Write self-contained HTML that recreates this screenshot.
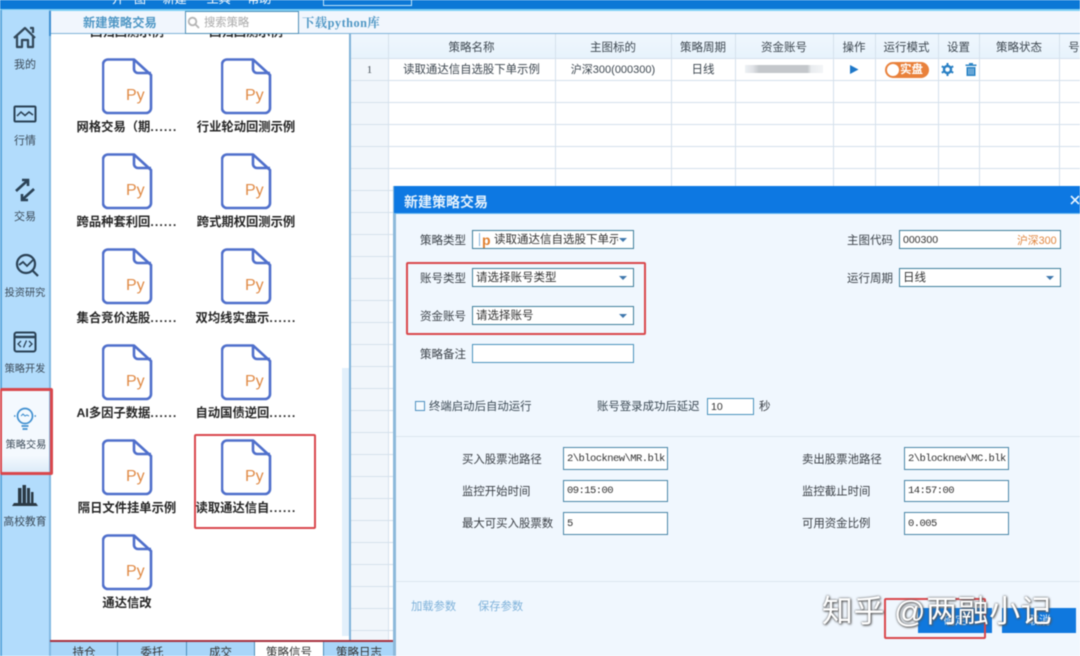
<!DOCTYPE html>
<html lang="zh-CN">
<head>
<meta charset="utf-8">
<title>新建策略交易</title>
<style>
html,body{margin:0;padding:0;width:1080px;height:656px;overflow:hidden;background:#fff}
#p{position:relative;width:1080px;height:656px;overflow:hidden;filter:blur(.5px);font-family:"Liberation Sans","Noto Sans CJK SC",sans-serif;font-size:11.5px;color:#3a3f45;background:#fff}
#p div,#p svg{position:absolute}
#p .t,#p .dl,#p .th,#p .lb,#p .side{margin-top:1px}
.t{white-space:nowrap;line-height:16px}
.side{left:0;width:50px;text-align:center;font-size:11px;line-height:14px;color:#3b4a58;white-space:nowrap}
.lb{width:130px;text-align:center;font-weight:700;font-size:12.3px;line-height:16px;color:#262626;white-space:nowrap}
.lb span{letter-spacing:1.1px}
.fi{width:54px;height:60px}
.fi text{font-family:"Liberation Sans",sans-serif;font-size:16px;fill:#e08a45}
.v{top:34px;width:1px;height:622px;background:#d5e1ec}
.h{left:351px;width:729px;height:1px;background:#d5e1ec}
.th{top:40px;text-align:center;line-height:15px;font-size:11.5px;color:#3d4750;white-space:nowrap}
.in{box-sizing:border-box;background:#fff;border:1px solid #3f7f9c;line-height:19px;padding-left:3px;font-size:11.5px;color:#333;white-space:nowrap;overflow:hidden}
.bl{border-color:#4a86a8;font-family:"Liberation Mono","Noto Sans CJK SC",monospace;font-size:10.5px;letter-spacing:-.55px;line-height:23px;padding-left:3px}
.ar{width:0;height:0;border-left:4px solid transparent;border-right:4px solid transparent;border-top:4px solid #3f78ad}
.dl{text-align:right;width:70px;line-height:16px;color:#3c4249;white-space:nowrap}
.rb{box-sizing:border-box;border:2px solid #d9474c;border-radius:2px}
.tab{top:642px;height:14px;background:#a9d6f9;border-right:1px solid #4d8db8;text-align:center;line-height:23px;font-size:11.5px;color:#333;overflow:hidden;white-space:nowrap}
</style>
</head>
<body>
<div id="p">
<svg width="0" height="0" style="left:0;top:0"><defs>
<g id="d" fill="none" stroke="#4f6fcb" stroke-width="2.6" stroke-linejoin="round">
<path d="M6 1.5H32L49 17V50a5 5 0 0 1-5 5H6a5 5 0 0 1-5-5V6.500a5 5 0 0 1 5-5Z"/>
<path d="M32 1.500V11a4 4 0 0 0 4 4H49"/>
</g></defs></svg>

<!-- top bar -->
<div style="left:0;top:0;width:1080px;height:10px;background:#0b78d6"></div>
<div style="left:0;top:9px;width:1080px;height:2px;background:#7fd0f5"></div>
<div class="t" style="left:112px;top:-10px;color:#fff;font-size:12px">开 &nbsp; 图 &nbsp;&nbsp;&nbsp; 新建 &nbsp;&nbsp;&nbsp;&nbsp; 工具 &nbsp;&nbsp;&nbsp; 帮助</div>
<div style="left:323px;top:-3px;width:89px;height:9px;box-sizing:border-box;border:1px solid #bfe4fa"></div>

<!-- sidebar -->
<div style="left:0;top:10px;width:50px;height:646px;background:#b2dcfc"></div>
<div style="left:0;top:10px;width:2px;height:646px;background:#5ba7dc"></div>
<div style="left:49px;top:10px;width:2px;height:646px;background:#82b9e2"></div>
<div style="left:2px;top:390px;width:47px;height:82px;background:linear-gradient(#f4f9fe 80%,#dcebf8)"></div>

<svg style="left:12px;top:25px" width="26" height="26" viewBox="0 0 26 26" fill="none" stroke="#33485a" stroke-width="2.200" stroke-linejoin="round"><path d="M2 13 13 3l10 10"/><path d="M5 11v11h5v-7h6v7h5V11"/><path d="M18 3h3v5"/></svg>
<div class="side" style="top:57px">我的</div>
<svg style="left:13px;top:105px" width="24" height="19" viewBox="0 0 24 19" fill="none" stroke="#2b4256" stroke-width="2"><rect x="1.500" y="1.500" width="21" height="15" rx="1"/><path d="M4 11l4-4 4 3.500 4-3.500 4 3" stroke-width="1.500"/></svg>
<div class="side" style="top:133px">行情</div>
<svg style="left:14px;top:178px" width="22" height="24" viewBox="0 0 22 24" fill="none" stroke="#2b4256" stroke-width="2.600"><path d="M2 13 13 3"/><path d="M8 2h6v6" /><path d="M20 11 9 21"/><path d="M14 22H8v-6"/></svg>
<div class="side" style="top:209px">交易</div>
<svg style="left:15px;top:253px" width="25" height="25" viewBox="0 0 25 25" fill="none" stroke="#2b4256" stroke-width="2.200"><circle cx="11" cy="11" r="9"/><path d="M4 12l4-3 4 4 6-6" stroke-width="1.800"/><path d="M17 17l6 6"/></svg>
<div class="side" style="top:286px;font-size:10.200px">投资研究</div>
<svg style="left:13px;top:331px" width="24" height="22" viewBox="0 0 24 22" fill="none" stroke="#2b4256" stroke-width="2"><rect x="1.500" y="1.500" width="21" height="19" rx="2"/><path d="M2 6h20" stroke-width="2.500"/><path d="M8 10l-3 3 3 3M16 10l3 3-3 3M13.500 9.500l-3 7" stroke-width="1.300"/></svg>
<div class="side" style="top:362px;font-size:10.200px">策略开发</div>
<svg style="left:13px;top:406px" width="24" height="26" viewBox="0 0 24 26" fill="none" stroke="#3f8fd0" stroke-width="1.700"><circle cx="12" cy="10" r="7.500"/><path d="M8 10l2-2 2 2 2-1 2 1" stroke-width="1"/><path d="M8.500 20h7M9.500 23h5" stroke-width="1.800"/><path d="M1 10h1.500M21.500 10H23" stroke-width="1.500"/></svg>
<div class="side" style="top:438px;font-size:10.200px;left:1px">策略交易</div>
<svg style="left:11px;top:483px" width="28" height="24" viewBox="0 0 28 24"><g fill="#2b3a45"><rect x="7" y="5" width="3.500" height="15"/><rect x="11.500" y="2" width="3.500" height="18"/><rect x="16" y="5" width="3" height="15"/><rect x="20" y="9" width="2.500" height="11"/><path d="M3 20h22l2 3H1Z"/></g></svg>
<div class="side" style="top:514px;font-size:10.800px">高校教育</div>

<!-- strategy list -->
<div class="lb" style="left:62px;top:23px">回归回测示例</div>
<div class="lb" style="left:181px;top:23px">回归回测示例</div>

<div class="fi" style="left:102px;top:58px"><svg width="54" height="60"><use href="#d"/><text x="24" y="42">Py</text></svg></div>
<div class="fi" style="left:221px;top:58px"><svg width="54" height="60"><use href="#d"/><text x="24" y="42">Py</text></svg></div>
<div class="lb" style="left:62px;top:118px">网格交易（期<span>......</span></div>
<div class="lb" style="left:181px;top:118px">行业轮动回测示例</div>

<div class="fi" style="left:102px;top:153px"><svg width="54" height="60"><use href="#d"/><text x="24" y="42">Py</text></svg></div>
<div class="fi" style="left:221px;top:153px"><svg width="54" height="60"><use href="#d"/><text x="24" y="42">Py</text></svg></div>
<div class="lb" style="left:62px;top:213px">跨品种套利回<span>......</span></div>
<div class="lb" style="left:181px;top:213px">跨式期权回测示例</div>

<div class="fi" style="left:102px;top:248px"><svg width="54" height="60"><use href="#d"/><text x="24" y="42">Py</text></svg></div>
<div class="fi" style="left:221px;top:248px"><svg width="54" height="60"><use href="#d"/><text x="24" y="42">Py</text></svg></div>
<div class="lb" style="left:62px;top:309px">集合竞价选股<span>......</span></div>
<div class="lb" style="left:181px;top:309px">双均线实盘示<span>......</span></div>

<div class="fi" style="left:102px;top:344px"><svg width="54" height="60"><use href="#d"/><text x="24" y="42">Py</text></svg></div>
<div class="fi" style="left:221px;top:344px"><svg width="54" height="60"><use href="#d"/><text x="24" y="42">Py</text></svg></div>
<div class="lb" style="left:62px;top:404px">AI多因子数据<span>......</span></div>
<div class="lb" style="left:181px;top:404px">自动国债逆回<span>......</span></div>

<div class="fi" style="left:102px;top:439px"><svg width="54" height="60"><use href="#d"/><text x="24" y="42">Py</text></svg></div>
<div class="fi" style="left:221px;top:439px"><svg width="54" height="60"><use href="#d"/><text x="24" y="42">Py</text></svg></div>
<div class="lb" style="left:62px;top:499px">隔日文件挂单示例</div>
<div class="lb" style="left:181px;top:499px">读取通达信自<span>......</span></div>

<div class="fi" style="left:102px;top:534px"><svg width="54" height="60"><use href="#d"/><text x="24" y="42">Py</text></svg></div>
<div class="lb" style="left:62px;top:594px">通达信改</div>

<!-- scrollbar and divider -->
<div style="left:342px;top:368px;width:7px;height:268px;background:#e3f0fb"></div>
<div style="left:349px;top:34px;width:2px;height:606px;background:#7fb2d8"></div>

<!-- header strip -->
<div style="left:51px;top:11px;width:1029px;height:23px;background:#f1f6fd"></div>
<div style="left:50px;top:33px;width:1030px;height:1px;background:#7fb3d8"></div>
<div style="left:49px;top:11px;width:2px;height:25px;background:#3f8fd0"></div>
<div class="t" style="left:83px;top:14px;font-size:12.300px;font-weight:700;color:#4f97c5">新建策略交易</div>
<div style="left:185px;top:11px;width:114px;height:23px;box-sizing:border-box;border:1px solid #4f8fb8;background:#fff"></div>
<svg style="left:187px;top:16px" width="13" height="13" viewBox="0 0 13 13" fill="none" stroke="#b5b5b5" stroke-width="1.800"><circle cx="5.500" cy="5.500" r="3.800"/><path d="M8.500 8.500l3.500 3.500"/></svg>
<div class="t" style="left:204px;top:14px;color:#aaa;font-size:11.300px">搜索策略</div>
<div class="t" style="left:302px;top:14px;font-family:'Liberation Serif','Noto Serif CJK SC',serif;font-weight:700;font-size:12.300px;letter-spacing:.5px;color:#4f97c5">下载python库</div>

<!-- grid -->
<div style="left:351px;top:34px;width:37px;height:622px;background:#f1f6fb"></div>
<div style="left:351px;top:34px;width:729px;height:24px;background:linear-gradient(#f0f7fe,#e7f3fc)"></div>
<div class="v" style="left:388px"></div><div class="v" style="left:555px"></div><div class="v" style="left:671px"></div><div class="v" style="left:735px"></div><div class="v" style="left:833px"></div><div class="v" style="left:875px"></div><div class="v" style="left:938px"></div><div class="v" style="left:979px"></div><div class="v" style="left:1059px"></div>
<div class="h" style="top:58px"></div><div class="h" style="top:80px"></div><div class="h" style="top:102px"></div><div class="h" style="top:124px"></div><div class="h" style="top:146px"></div><div class="h" style="top:168px"></div><div class="h" style="top:190px"></div><div class="h" style="top:212px"></div><div class="h" style="top:234px"></div><div class="h" style="top:256px"></div><div class="h" style="top:278px"></div><div class="h" style="top:300px"></div><div class="h" style="top:322px"></div><div class="h" style="top:344px"></div><div class="h" style="top:366px"></div><div class="h" style="top:388px"></div><div class="h" style="top:410px"></div><div class="h" style="top:432px"></div><div class="h" style="top:454px"></div><div class="h" style="top:476px"></div><div class="h" style="top:498px"></div><div class="h" style="top:520px"></div><div class="h" style="top:542px"></div><div class="h" style="top:564px"></div><div class="h" style="top:586px"></div><div class="h" style="top:608px"></div><div class="h" style="top:630px"></div>

<div class="th" style="left:388px;width:167px">策略名称</div>
<div class="th" style="left:555px;width:116px">主图标的</div>
<div class="th" style="left:671px;width:64px">策略周期</div>
<div class="th" style="left:735px;width:98px">资金账号</div>
<div class="th" style="left:833px;width:42px">操作</div>
<div class="th" style="left:875px;width:63px">运行模式</div>
<div class="th" style="left:938px;width:41px">设置</div>
<div class="th" style="left:979px;width:80px">策略状态</div>
<div class="th" style="left:1059px;width:30px">号</div>
<div class="th" style="left:351px;width:37px;top:62px;font-family:'Liberation Serif',serif;font-size:10.500px">1</div>
<div class="th" style="left:388px;width:167px;top:62px;font-size:11.400px">读取通达信自选股下单示例</div>
<div class="th" style="left:555px;width:116px;top:62px;font-size:11px">沪深300(000300)</div>
<div class="th" style="left:671px;width:64px;top:62px">日线</div>
<div style="left:745px;top:65px;width:78px;height:8px;background:linear-gradient(90deg,#eef1f4,#dfe2e6 10%,#c4c7cb 18%,#c4c7cb 80%,#e9ecef 85%,#f3f5f7)"></div>
<svg style="left:850px;top:65px" width="9" height="9" viewBox="0 0 9 9"><path d="M0 0l8.500 4.500L0 9Z" fill="#1e78c8"/></svg>
<div style="left:885px;top:62px;width:44px;height:16px;border-radius:8px;background:#e9813b"></div>
<div style="left:887px;top:64px;width:12px;height:12px;border-radius:6px;background:#fff"></div>
<div class="t" style="left:900px;top:61px;color:#fff;font-size:11.500px;font-weight:700">实盘</div>
<svg style="left:941px;top:63px" width="13" height="13" viewBox="0 0 13 13" fill="none" stroke="#2a80c4"><circle cx="6.500" cy="6.500" r="3.500" stroke-width="2.400"/><path d="M6.500 0v3M6.500 10v3M0.800 3.200l2.600 1.500M9.600 8.300l2.600 1.500M0.800 9.800l2.600-1.500M9.600 4.700l2.600-1.500" stroke-width="2"/></svg>
<svg style="left:965px;top:63px" width="12" height="13" viewBox="0 0 12 13" fill="#2f86c6"><rect x="0.500" y="1.500" width="11" height="1.500"/><rect x="4" y="0" width="4" height="1.500"/><path d="M1.500 4h9v9h-9Z"/><path d="M4 5.500v6M6 5.500v6M8 5.500v6" stroke="#cfe4f5" stroke-width=".7"/></svg>

<!-- bottom tabs -->
<div class="tab" style="left:51px;width:66px">持仓</div>
<div class="tab" style="left:118px;width:68px">委托</div>
<div class="tab" style="left:187px;width:67px">成交</div>
<div class="tab" style="left:255px;width:68px;background:#fff">策略信号</div>
<div class="tab" style="left:324px;width:70px">策略日志</div>
<div style="left:50px;top:640px;width:345px;height:2px;background:#a8323f"></div>

<!-- dialog -->
<div style="left:394px;top:186px;width:686px;height:470px;background:#f0f7fe"></div>
<div style="left:393px;top:186px;width:3px;height:470px;background:#8db9da"></div>
<div style="left:394px;top:186px;width:686px;height:28px;background:#0d78e2"></div>
<div style="left:394px;top:213px;width:686px;height:1px;background:#6ab8ef"></div>
<div class="t" style="left:404px;top:193px;font-size:14px;font-weight:700;color:#e6f2fc">新建策略交易</div>
<svg style="left:1070px;top:195px" width="10" height="10" viewBox="0 0 10 10" stroke="#e8f4fe" stroke-width="1.600"><path d="M1 1l8 8M9 1L1 9"/></svg>

<div class="dl" style="left:396px;top:232px">策略类型</div>
<div class="in" style="left:472px;top:230px;width:162px;height:19px;padding-left:21px">读取通达信自选股下单示</div>
<div style="left:479px;top:233px;width:1px;height:13px;background:#87b6dc"></div>
<div class="t" style="left:482px;top:231px;color:#e07f2e;font-weight:700;font-size:14px">p</div>
<div style="left:618px;top:231px;width:15px;height:17px;background:#fff"></div>
<div class="ar" style="left:619px;top:238px"></div>

<div class="dl" style="left:396px;top:270px">账号类型</div>
<div class="in" style="left:472px;top:268px;width:162px;height:19px">请选择账号类型</div>
<div class="ar" style="left:619px;top:276px"></div>
<div class="dl" style="left:396px;top:308px">资金账号</div>
<div class="in" style="left:472px;top:306px;width:162px;height:19px">请选择账号</div>
<div class="ar" style="left:619px;top:314px"></div>
<div class="dl" style="left:396px;top:346px">策略备注</div>
<div class="in" style="left:472px;top:344px;width:162px;height:19px;border-color:#4a93bd"></div>

<div class="dl" style="left:823px;top:232px">主图代码</div>
<div class="in" style="left:899px;top:230px;width:162px;height:19px;font-size:10.500px">000300</div>
<div class="t" style="left:1017px;top:232px;color:#e0863f;font-size:10.800px">沪深300</div>
<div class="dl" style="left:823px;top:270px">运行周期</div>
<div class="in" style="left:899px;top:268px;width:162px;height:19px">日线</div>
<div class="ar" style="left:1046px;top:276px"></div>

<div style="left:415px;top:401px;width:10px;height:10px;box-sizing:border-box;border:1px solid #4f90c0;background:#f5fafe"></div>
<div class="t" style="left:429px;top:398px;width:110px;color:#3c4a55;font-size:11.400px">终端启动后自动运行</div>
<div class="t" style="left:597px;top:398px;color:#3c4a55;font-size:11.400px">账号登录成功后延迟</div>
<div class="in" style="left:707px;top:398px;width:47px;height:17px;line-height:16px;font-size:10.500px;border-color:#4a93bd">10</div>
<div class="t" style="left:759px;top:398px">秒</div>

<div style="left:396px;top:436px;width:684px;height:1px;background:#dce6ee"></div>
<div style="left:396px;top:581px;width:684px;height:1px;background:#dce6ee"></div>

<div class="t" style="left:462px;top:451px;font-size:11.400px">买入股票池路径</div>
<div class="t" style="left:462px;top:483px;font-size:11.400px">监控开始时间</div>
<div class="t" style="left:462px;top:515px;font-size:11.400px">最大可买入股票数</div>
<div class="in bl" style="left:563px;top:447px;width:105px;height:23px">2\blocknew\MR.blk</div>
<div class="in bl" style="left:563px;top:480px;width:105px;height:22px;line-height:21px">09:15:00</div>
<div class="in bl" style="left:563px;top:512px;width:105px;height:23px">5</div>

<div class="t" style="left:802px;top:451px;font-size:11.400px">卖出股票池路径</div>
<div class="t" style="left:802px;top:483px;font-size:11.400px">监控截止时间</div>
<div class="t" style="left:802px;top:515px;font-size:11.400px">可用资金比例</div>
<div class="in bl" style="left:904px;top:447px;width:105px;height:23px">2\blocknew\MC.blk</div>
<div class="in bl" style="left:904px;top:480px;width:105px;height:22px;line-height:21px">14:57:00</div>
<div class="in bl" style="left:904px;top:512px;width:105px;height:23px">0.005</div>

<div class="t" style="left:411px;top:598px;color:#7fb2da;font-size:11.300px">加载参数</div>
<div class="t" style="left:478px;top:598px;color:#7fb2da;font-size:11.300px">保存参数</div>

<div style="left:918px;top:608px;width:74px;height:25px;background:#0f78de;color:#d8ebfb;text-align:center;line-height:27px">确定</div>
<div style="left:1002px;top:608px;width:74px;height:25px;background:#0f78de;color:#d8ebfb;text-align:center;line-height:27px">取消</div>

<!-- red highlight boxes -->
<div class="rb" style="left:0;top:388px;width:53px;height:87px;border-width:3px;border-left-width:2px"></div>
<div class="rb" style="left:194px;top:434px;width:122px;height:95px"></div>
<div class="rb" style="left:406px;top:262px;width:240px;height:73px"></div>
<div class="rb" style="left:884px;top:598px;width:102px;height:41px"></div>

<!-- watermark -->
<div class="t" style="left:822px;top:592px;line-height:38px;font-size:31px;color:#fff;text-shadow:0 0 2px #555,1px 1px 2px #555;letter-spacing:.5px">知乎 @两融小记</div>
</div>
</body>
</html>
